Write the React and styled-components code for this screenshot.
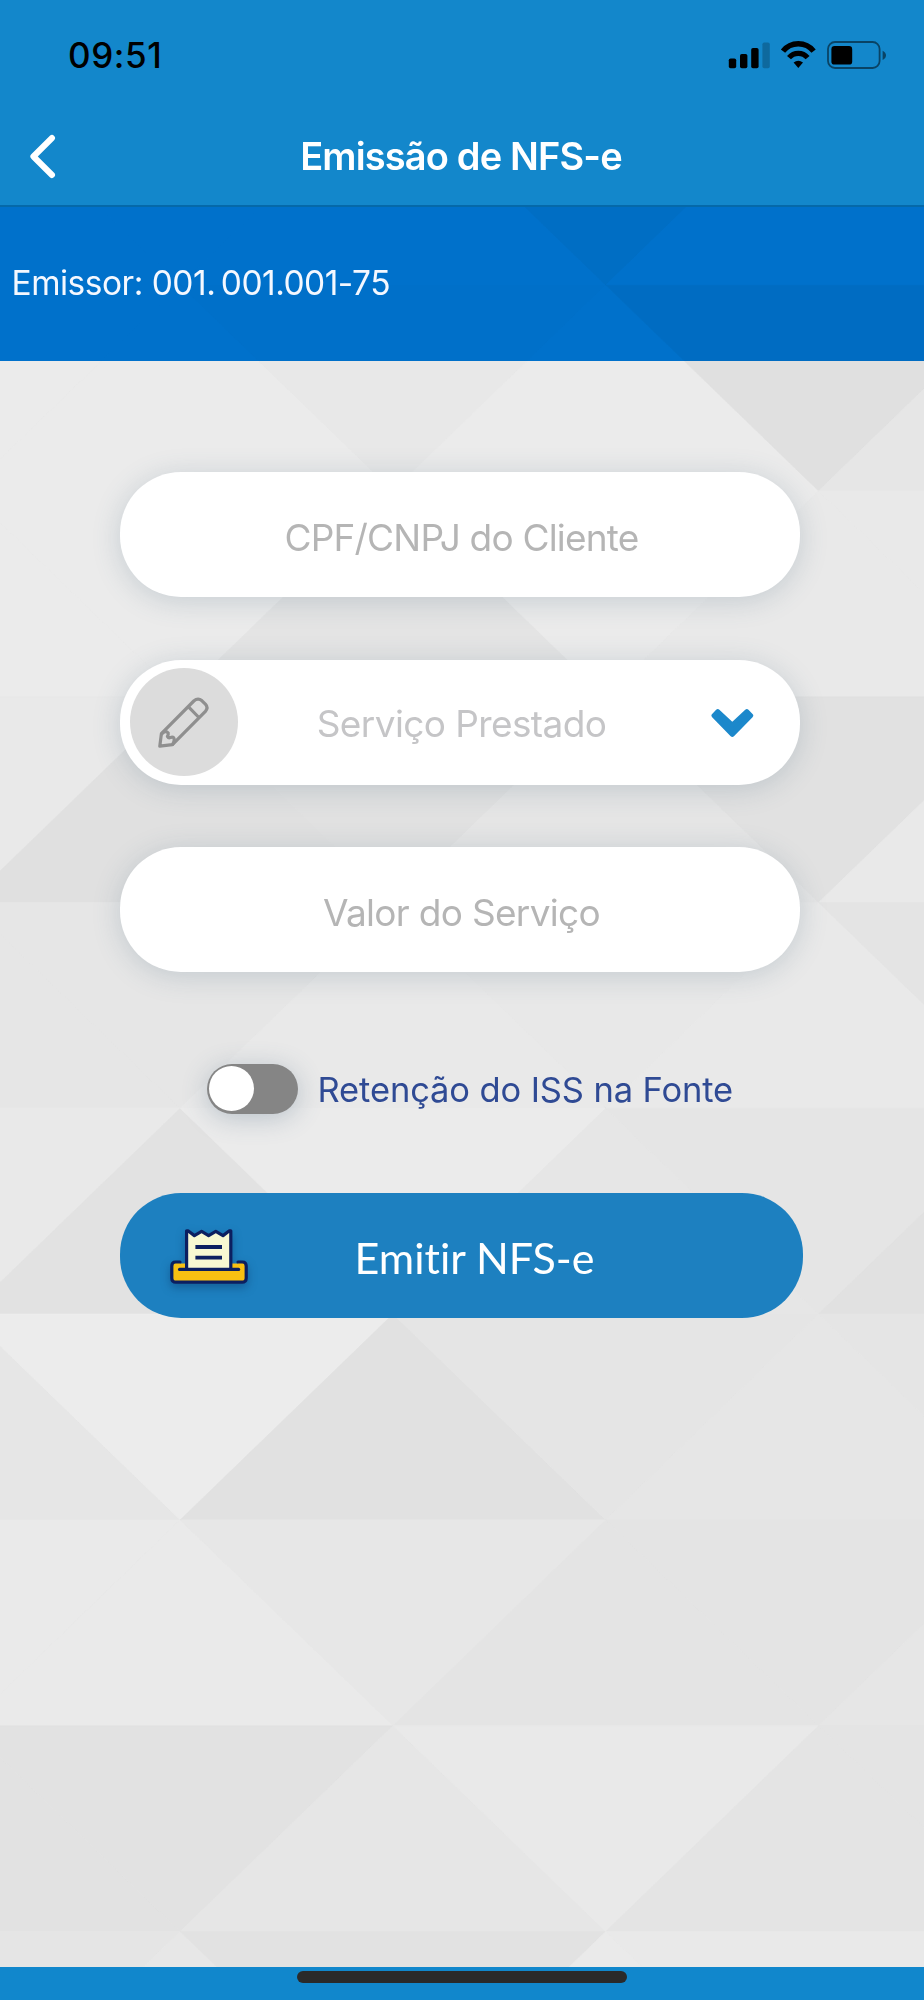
import { useState } from "react"
import styled, { createGlobalStyle } from "styled-components"

const GlobalStyle = createGlobalStyle`
    * {
        box-sizing: border-box;
    }
    body {
        margin: 0;
        font-family: Inter, "Liberation Sans", sans-serif;
    }
`

const Container = styled.div`
    position: relative;
    isolation: isolate;
    display: flex;
    flex-direction: column;
    width: 924px;
    height: 2000px;
    overflow: hidden;
    background-color: #e7e7e7;
`

const Backdrop = styled.svg`
    position: absolute;
    inset: 0;
    z-index: -1;
`

const Header = styled.header`
    height: 207px;
    background-color: #1387cb;
    border-bottom: 2px solid #0569a9;
`

const StatusBar = styled.div`
    display: flex;
    align-items: center;
    justify-content: space-between;
    height: 110px;
    padding: 0 37px 0 68px;
`

const Clock = styled.span`
    font-size: 35px;
    font-weight: 550;
    letter-spacing: 0.6px;
    color: #000;
`

const StatusIcons = styled.svg`
    display: block;
`

const NavBar = styled.div`
    display: grid;
    grid-template-columns: 100px 1fr 100px;
    align-items: center;
    height: 92px;
`

const BackButton = styled.button`
    display: flex;
    padding: 0 0 0 28px;
    border: none;
    background: none;
    cursor: pointer;
`

const Title = styled.h1`
    margin: 0;
    padding-right: 2px;
    font-size: 38px;
    font-weight: 600;
    letter-spacing: -0.85px;
    text-align: center;
    white-space: nowrap;
    color: #fff;
`

const Issuer = styled.div`
    position: relative;
    display: flex;
    align-items: center;
    height: 154px;
    padding: 0 0 3px 11.5px;

    /* tints the triangles behind the band without dimming its text */
    &::before {
        content: "";
        position: absolute;
        inset: 0;
        z-index: -1;
        background-color: #007bdd;
        mix-blend-mode: multiply;
    }
`

const IssuerText = styled.p`
    margin: 0;
    font-size: 33.5px;
    letter-spacing: -0.5px;
    white-space: nowrap;
    color: #f4f8ff;
`

const Group = styled.span`
    margin-right: 5.5px;
`

const Form = styled.form`
    flex: 1;
    display: flex;
    flex-direction: column;
    padding: 111px 120px 0 120px;
`

const Field = styled.div`
    display: flex;
    align-items: center;
    width: 680px;
    height: 125px;
    margin-bottom: 62.5px;
    padding: ${(props) => (props.$select ? "0 46px 0 10px" : "0")};
    border-radius: 61px;
    background-color: #fff;
    box-shadow: 0 4px 28px rgba(70, 100, 125, 0.22);
`

const Input = styled.input`
    flex: 1;
    min-width: 0;
    height: 100%;
    padding: 5px 0 0 3px;
    border: none;
    outline: none;
    background: none;
    font-family: inherit;
    font-size: 37px;
    font-weight: 400;
    letter-spacing: ${(props) => props.$spacing || "0"};
    text-align: center;
    color: #555;

    &::placeholder {
        color: #b5b5b5;
        opacity: 1;
    }
`

const SelectLabel = styled.span`
    flex: 1;
    padding: 3px 26px 0 0;
    font-size: 37px;
    letter-spacing: -0.6px;
    text-align: center;
    white-space: nowrap;
    color: #c5c5c7;
`

const PencilBadge = styled.span`
    display: flex;
    align-items: center;
    justify-content: center;
    width: 108px;
    height: 108px;
    padding-top: 2px;
    border-radius: 50%;
    background-color: #dcdcdc;
`

const Chevron = styled.svg`
    display: block;
    margin-top: 3px;
`

const Retention = styled.div`
    display: flex;
    align-items: center;
    height: 50px;
    margin: 29px 0 79.5px 86.5px;
`

const Switch = styled.button`
    display: flex;
    align-items: center;
    justify-content: ${(props) => (props.$on ? "flex-end" : "flex-start")};
    width: 91px;
    height: 50px;
    padding: 0 2px;
    border: none;
    border-radius: 25px;
    background-color: ${(props) => (props.$on ? "#1387cb" : "#858585")};
    box-shadow: 0 4px 26px rgba(70, 100, 125, 0.3);
    cursor: pointer;
`

const Knob = styled.span`
    width: 45px;
    height: 45px;
    border-radius: 50%;
    background-color: #fff;
`

const RetentionLabel = styled.span`
    margin-left: 20px;
    padding-top: 2px;
    font-size: 34.5px;
    letter-spacing: -0.12px;
    white-space: nowrap;
    color: #2f4a94;
`

const Submit = styled.button`
    display: grid;
    grid-template-columns: 132px 1fr 106px;
    align-items: center;
    width: 683px;
    height: 125px;
    padding: 0;
    border: none;
    border-radius: 61px;
    background-color: #1d80c0;
    font-family: Lato, "Liberation Sans", sans-serif;
    font-size: 43px;
    font-variant-ligatures: none;
    color: #fff;
    cursor: pointer;
`

const SubmitLabel = styled.span`
    padding-top: 4px;
`

const ReceiptIcon = styled.svg`
    justify-self: end;
    filter: drop-shadow(0 4px 5px rgba(0, 20, 60, 0.3));
`

const Footer = styled.footer`
    display: flex;
    justify-content: center;
    height: 33.5px;
    padding-top: 4px;
    background-color: #1187cc;
`

const HomeIndicator = styled.div`
    width: 330px;
    height: 12px;
    border-radius: 6px;
    background-color: #2a2a2a;
`

// Triangle mosaic: each row starts left of the screen and alternates
// between triangles pointing up and down.
const HALF = 212.8
const ROW = 205.8
const LEFT = -245.4
const TOP = 79.3
const rows = [
    { up: true, tones: ["ebebeb", "ebebeb", "ebebeb", "e3e3e3", "ebebeb", "ebebeb"] },
    { up: false, tones: ["ebebeb", "ebebeb", "e8e8e8", "ebebeb", "e0e0e0", "e6e6e6"] },
    { up: true, tones: ["ebebeb", "ebebeb", "e4e4e4", "ebebeb", "e9e9e9", "e9e9e9"] },
    { up: false, tones: ["e9e9e9", "e0e0e0", "e1e1e1", "e5e5e5", "e1e1e1", "e9e9e9"] },
    { up: true, tones: ["e6e6e6", "e6e6e6", "e9e9e9", "e8e8e8", "e9e9e9", "e4e4e4"] },
    { up: false, tones: ["e9e9e9", "e2e2e2", "ebebeb", "e6e6e6", "e5e5e5", "e1e1e1"] },
    { up: true, tones: ["e6e6e6", "ececec", "e1e1e1", "e5e5e5", "e6e6e6", "e5e5e5"] },
    { up: false, tones: ["eaeaea", "eaeaea", "e7e7e7", "e4e4e4", "e4e4e4", "e6e6e6"] },
    { up: true, tones: ["e2e2e2", "e2e2e2", "e6e6e6", "e9e9e9", "e4e4e4", "e4e4e4"] },
    { up: false, tones: ["e5e5e5", "e7e7e7", "e2e2e2", "eaeaea", "e9e9e9", "e9e9e9"] },
]

const Triangles = () => (
    <Backdrop width="924" height="2000" viewBox="0 0 924 2000">
        {rows.map((row, r) =>
            row.tones.map((tone, i) => {
                const left = LEFT + i * HALF
                const top = TOP + r * ROW
                const up = i % 2 === 0 ? row.up : !row.up
                const base = up ? top + ROW : top
                const apex = up ? top : top + ROW
                return (
                    <polygon
                        key={`${r}-${i}`}
                        points={`${left},${base} ${left + 2 * HALF},${base} ${left + HALF},${apex}`}
                        fill={`#${tone}`}
                        stroke={`#${tone}`}
                        strokeWidth="0.6"
                    />
                )
            })
        )}
    </Backdrop>
)

const App = () => {
    const [retention, setRetention] = useState(false)

    return (
        <Container>
            <GlobalStyle />
            <Triangles />
            <Header>
                <StatusBar>
                    <Clock>09:51</Clock>
                    <StatusIcons width="159" height="30" viewBox="728 40 159 30">
                        <rect x="728.8" y="58.5" width="7.4" height="9.7" rx="1.8" />
                        <rect x="740" y="54" width="7.4" height="14.2" rx="1.8" />
                        <rect x="751.2" y="48" width="7.4" height="20.2" rx="1.8" />
                        <rect x="762.4" y="42.5" width="7.4" height="25.7" rx="1.8" opacity="0.22" />
                        <g fill="none" stroke="#000" strokeWidth="5.2">
                            <path d="M783 51.2 A19.4 19.4 0 0 1 813.6 51.2" strokeWidth="5.4" />
                            <path d="M789 57.6 A12.3 12.3 0 0 1 807.6 57.6" />
                        </g>
                        <path d="M793.6 62.6 Q798.3 59 803 62.6 L798.3 68 Z" />
                        <rect x="828" y="42" width="51.6" height="26" rx="7" fill="none" stroke="#000" strokeOpacity="0.5" strokeWidth="1.8" />
                        <rect x="831.4" y="46" width="20.8" height="18.6" rx="3.2" />
                        <path d="M882.6 50.8 Q886 52.4 886 55.3 Q886 58.4 882.6 60 Z" opacity="0.5" />
                    </StatusIcons>
                </StatusBar>
                <NavBar>
                    <BackButton type="button" aria-label="Voltar">
                        <svg width="30" height="46" viewBox="28 133 30 46">
                            <path d="M52 138 L33.4 156.5 L52 175" fill="none" stroke="#fff" strokeWidth="6" strokeLinecap="round" strokeLinejoin="round" />
                        </svg>
                    </BackButton>
                    <Title>Emissão de NFS-e</Title>
                </NavBar>
            </Header>
            <Issuer>
                <IssuerText>
                    Emissor: <Group>001.</Group>001.001-75
                </IssuerText>
            </Issuer>
            <Form onSubmit={(e) => e.preventDefault()}>
                <Field>
                    <Input name="document" placeholder="CPF/CNPJ do Cliente" $spacing="-0.8px" />
                </Field>
                <Field $select>
                    <PencilBadge>
                        <svg width="60" height="60" viewBox="0 0 60 60" fill="none" stroke="#8f8f8f" strokeWidth="3.2" strokeLinejoin="round" strokeLinecap="round">
                            <path d="M5.8 53.2 L7.4 40.6 L39.8 8 Q44 4.2 48 7.8 L51.4 11.2 Q54.6 14.6 51.4 18.4 L18.4 51.6 Z" />
                            <path d="M35 14.4 L44.4 24" />
                            <path d="M7.8 40.8 Q11.6 37 14.2 40 Q14.6 42 13.4 43.4 Q14.6 45.4 16.6 44.4 Q19.6 43.4 20.2 46 Q20.4 49.6 18.6 51.4" />
                        </svg>
                    </PencilBadge>
                    <SelectLabel>Serviço Prestado</SelectLabel>
                    <Chevron width="43" height="31" viewBox="0 0 43 31">
                        <path d="M2.8 7.6 L6.8 3.4 L21.3 17 L35.8 3.4 L39.9 7.6 L21.3 26.6 Z" fill="#1c88cb" stroke="#1c88cb" strokeWidth="4.6" strokeLinejoin="round" />
                    </Chevron>
                </Field>
                <Field>
                    <Input name="amount" placeholder="Valor do Serviço" $spacing="-0.7px" />
                </Field>
                <Retention>
                    <Switch type="button" role="switch" aria-checked={retention} $on={retention} onClick={() => setRetention(!retention)}>
                        <Knob />
                    </Switch>
                    <RetentionLabel>Retenção do ISS na Fonte</RetentionLabel>
                </Retention>
                <Submit type="submit">
                    <ReceiptIcon width="84" height="60" viewBox="0 0 84 60" stroke="#0c1f60" strokeWidth="3.2" strokeLinecap="round" strokeLinejoin="round">
                        <path d="M12 36 H7.6 Q3.8 36 3.8 40 V52 Q3.8 56.2 8 56.2 H74 Q78.2 56.2 78.2 52 V40 Q78.2 36 74.4 36 H70 V43.4 H12 Z" fill="#f9c012" stroke="none" />
                        <rect x="12" y="37.5" width="58" height="8" fill="#f9c012" stroke="none" />
                        <path d="M18.6 43 V4.8 H20 L26.4 9.6 L33.6 5.4 L40.6 9.6 L47.8 5.4 L55 9.6 L61.4 4.8 H62.8 V43" fill="#f7f8d2" />
                        <path d="M12 36 H7.6 Q3.8 36 3.8 40 V52 Q3.8 56.2 8 56.2 H74 Q78.2 56.2 78.2 52 V40 Q78.2 36 74.4 36 H70" fill="none" />
                        <path d="M11.6 43.4 H70.6" />
                        <path d="M27.4 21 H54 M27.4 31.6 H54" strokeWidth="3.8" strokeLinecap="butt" />
                    </ReceiptIcon>
                    <SubmitLabel>Emitir NFS-e</SubmitLabel>
                </Submit>
            </Form>
            <Footer>
                <HomeIndicator />
            </Footer>
        </Container>
    )
}

export default App
